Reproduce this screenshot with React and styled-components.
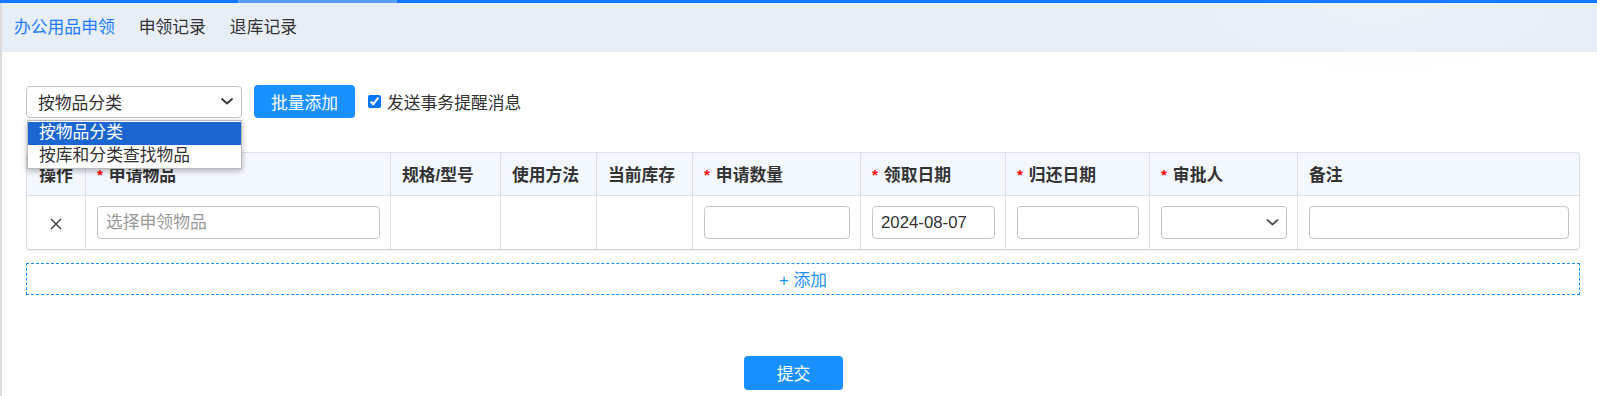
import React from "react";
import styled, { createGlobalStyle } from "styled-components";

const BLUE = "#1890ff";
const LINE = "#dcdfe6";

const GlobalStyle = createGlobalStyle`
  body {
    margin: 0;
    background: #fff;
    font-family: "Liberation Sans", "Noto Sans CJK SC", sans-serif;
    color: #333;
  }
  * {
    box-sizing: border-box;
  }
`;

const TopBar = styled.div`
  display: flex;
  height: 3px;
  background: #1677ff;
`;

const TopBarSegment = styled.div`
  margin-left: 238px;
  width: 159px;
  background: #5a9dff;
`;

const Page = styled.div`
  min-height: 393px;
  border-left: 2px solid #dcdcdc;
  background-image: radial-gradient(
    ellipse 200px 72px at 1378px 0px,
    rgba(120, 130, 150, 0.035) 0%,
    rgba(120, 130, 150, 0.02) 70%,
    rgba(255, 255, 255, 0) 100%
  );
`;

const TabBar = styled.div`
  display: flex;
  align-items: center;
  gap: 24px;
  height: 49px;
  padding-left: 12px;
  background-color: #e7eef6;
  background-image: radial-gradient(
    ellipse 200px 72px at 1378px 0px,
    rgba(255, 255, 255, 0.2) 0%,
    rgba(255, 255, 255, 0.08) 70%,
    rgba(255, 255, 255, 0) 100%
  );
`;

const Tab = styled.div`
  font-size: 16.8px;
  line-height: 20px;
  color: ${(props) => (props.$active ? "#1e7bff" : "#333")};
`;

const Content = styled.div`
  padding: 33px 17px 0 24px;
`;

const Toolbar = styled.div`
  display: flex;
  align-items: center;
  height: 33px;
`;

const SelectWrap = styled.div`
  position: relative;
`;

const SelectBox = styled.div`
  display: flex;
  align-items: center;
  justify-content: space-between;
  width: ${(props) => props.$width || "100%"};
  height: ${(props) => props.$height || "33px"};
  padding: 0 ${(props) => props.$padRight || "9px"} 0 11px;
  border: 1px solid #c4c4c4;
  border-radius: 4px;
  background: #fff;
  font-size: 16.8px;
  color: #333;
`;

const Dropdown = styled.div`
  position: absolute;
  top: 34px;
  left: 1px;
  width: 215px;
  padding: 1px 0;
  background: #fff;
  border: 1px solid #b9b9b9;
  box-shadow: 0 2px 6px rgba(0, 0, 0, 0.28);
  z-index: 10;
`;

const Option = styled.div`
  height: ${(props) => (props.$selected ? "23px" : "22px")};
  padding-left: 11px;
  font-size: 16.8px;
  line-height: 22px;
  color: ${(props) => (props.$selected ? "#fff" : "#333")};
  background: ${(props) => (props.$selected ? "#1c66d2" : "#fff")};
`;

const Button = styled.button`
  width: ${(props) => props.$width};
  height: ${(props) => props.$height};
  border: none;
  border-radius: 4px;
  background: ${BLUE};
  color: #fff;
  font-family: inherit;
  font-size: 16.8px;
  padding: 0;
  cursor: pointer;
`;

const CheckLabel = styled.label`
  display: flex;
  align-items: center;
  gap: 6px;
  margin-left: 13px;
  font-size: 16.8px;
  color: #333;

  input {
    width: 13px;
    height: 13px;
    margin: 0;
  }
`;

const Table = styled.div`
  display: grid;
  grid-template-columns: 59px 305px 110px 96px 96px 168px 145px 144px 148px 1fr;
  margin-top: 34px;
  border: 1px solid ${LINE};
  border-bottom-color: #d2d2d2;
  border-radius: 4px;
  box-shadow: 0 1px 1px rgba(0, 0, 0, 0.06);
  overflow: hidden;
`;

const HeadCell = styled.div`
  display: flex;
  align-items: center;
  justify-content: ${(props) => (props.$center ? "center" : "flex-start")};
  height: 43px;
  padding: 0 ${(props) => (props.$center ? "0" : "11px")};
  background: #f3f8fe;
  border-bottom: 1px solid ${LINE};
  border-right: ${(props) => (props.$last ? "none" : `1px solid ${LINE}`)};
  font-size: 16.8px;
  font-weight: 700;
  color: #333;
  white-space: nowrap;
`;

const Required = styled.span`
  margin-right: 6px;
  color: #f00;
  font-size: 15px;
  font-weight: 700;
`;

const BodyCell = styled.div`
  display: flex;
  align-items: center;
  justify-content: ${(props) => (props.$center ? "center" : "flex-start")};
  height: 53px;
  padding: 0 ${(props) => (props.$center ? "0" : "10px 0 11px")};
  border-right: ${(props) => (props.$last ? "none" : `1px solid ${LINE}`)};
`;

const Input = styled.input`
  width: 100%;
  height: 33px;
  padding: 0 8px;
  border: 1px solid #c4c4c4;
  border-radius: 4px;
  font-family: inherit;
  font-size: 16.8px;
  color: #333;
  outline: none;

  &::placeholder {
    color: #9a9a9a;
  }
`;

const RemoveButton = styled.span`
  display: flex;
  width: 12px;
  height: 12px;
  margin-top: 3px;
  cursor: pointer;
`;

const AddRow = styled.div`
  display: flex;
  align-items: center;
  justify-content: center;
  height: 32px;
  margin-top: 13px;
  border: 1px dashed ${BLUE};
  font-size: 16.8px;
  color: ${BLUE};
  cursor: pointer;
`;

const Footer = styled.div`
  display: flex;
  justify-content: center;
  margin-top: 61px;
  padding-right: 19px;
`;

const Chevron = ({ width = 12, color = "#333" }) => (
  <svg width={width} height="7" viewBox="0 0 12 7" fill="none">
    <path d="M1 1l5 4.5L11 1" stroke={color} strokeWidth="1.8" strokeLinecap="round" strokeLinejoin="round" />
  </svg>
);

const CloseIcon = () => (
  <svg width="12" height="12" viewBox="0 0 12 12">
    <path d="M1 1l10 10M11 1L1 11" stroke="#333" strokeWidth="1.3" />
  </svg>
);

const columns = [
  { label: "操作", center: true },
  { label: "申请物品", required: true },
  { label: "规格/型号" },
  { label: "使用方法" },
  { label: "当前库存" },
  { label: "申请数量", required: true },
  { label: "领取日期", required: true },
  { label: "归还日期", required: true },
  { label: "审批人", required: true },
  { label: "备注" },
];

const App = () => {
  return (
    <>
      <GlobalStyle />
      <TopBar>
        <TopBarSegment />
      </TopBar>
      <Page>
        <TabBar>
          <Tab $active>办公用品申领</Tab>
          <Tab>申领记录</Tab>
          <Tab>退库记录</Tab>
        </TabBar>
        <Content>
          <Toolbar>
            <SelectWrap>
              <SelectBox $width="216px" $height="32px" $padRight="8px">
                按物品分类
                <Chevron />
              </SelectBox>
              <Dropdown>
                <Option $selected>按物品分类</Option>
                <Option>按库和分类查找物品</Option>
              </Dropdown>
            </SelectWrap>
            <Button $width="101px" $height="33px" style={{ marginLeft: 12 }}>
              批量添加
            </Button>
            <CheckLabel>
              <input type="checkbox" defaultChecked />
              发送事务提醒消息
            </CheckLabel>
          </Toolbar>

          <Table>
            {columns.map((col, i) => (
              <HeadCell key={col.label} $center={col.center} $last={i === columns.length - 1}>
                {col.required && <Required>*</Required>}
                {col.label}
              </HeadCell>
            ))}
            <BodyCell $center>
              <RemoveButton>
                <CloseIcon />
              </RemoveButton>
            </BodyCell>
            <BodyCell>
              <Input placeholder="选择申领物品" />
            </BodyCell>
            <BodyCell />
            <BodyCell />
            <BodyCell />
            <BodyCell>
              <Input />
            </BodyCell>
            <BodyCell>
              <Input defaultValue="2024-08-07" />
            </BodyCell>
            <BodyCell>
              <Input />
            </BodyCell>
            <BodyCell>
              <SelectBox $padRight="7px">
                <span />
                <Chevron width={13} color="#555" />
              </SelectBox>
            </BodyCell>
            <BodyCell $last>
              <Input />
            </BodyCell>
          </Table>

          <AddRow>+ 添加</AddRow>

          <Footer>
            <Button $width="99px" $height="34px">提交</Button>
          </Footer>
        </Content>
      </Page>
    </>
  );
};

export default App;
